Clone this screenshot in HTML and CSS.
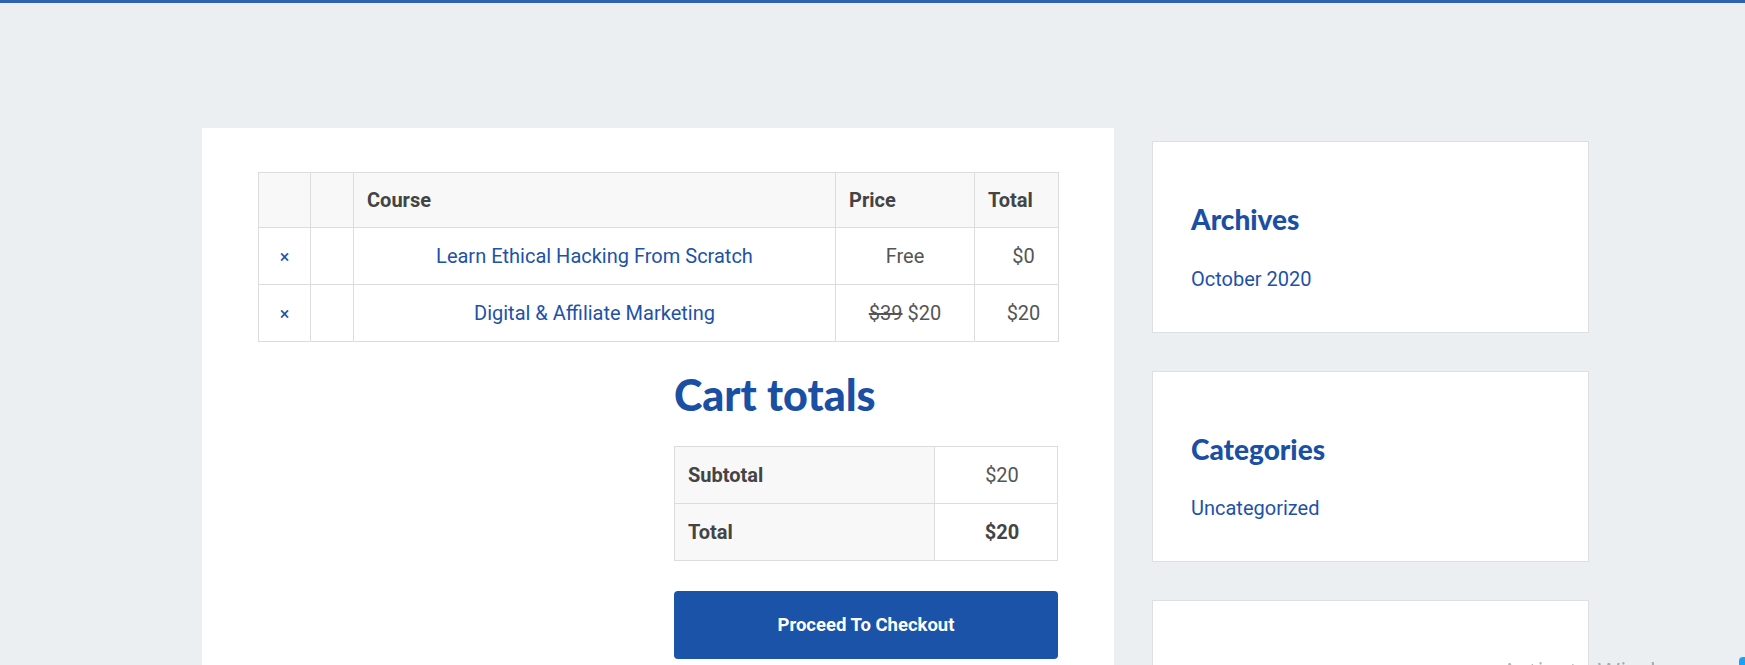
FILE: index.html
```html
<!DOCTYPE html>
<html lang="en">
<head>
<meta charset="utf-8">
<title>Cart</title>
<link rel="stylesheet" href="styles.css">
</head>
<body>
<div class="page">
  <main class="card">
    <table class="cart">
      <thead>
        <tr>
          <th class="c-remove"></th>
          <th class="c-thumb"></th>
          <th class="c-name">Course</th>
          <th class="c-price">Price</th>
          <th class="c-total">Total</th>
        </tr>
      </thead>
      <tbody>
        <tr>
          <td class="c-remove"><a href="#" class="remove">×</a></td>
          <td class="c-thumb"></td>
          <td class="c-name"><a href="#">Learn Ethical Hacking From Scratch</a></td>
          <td class="c-price">Free</td>
          <td class="c-total">$0</td>
        </tr>
        <tr>
          <td class="c-remove"><a href="#" class="remove">×</a></td>
          <td class="c-thumb"></td>
          <td class="c-name"><a href="#">Digital &amp; Affiliate Marketing</a></td>
          <td class="c-price"><del>$39</del> $20</td>
          <td class="c-total">$20</td>
        </tr>
      </tbody>
    </table>

    <section class="totals">
      <h2 class="totals-title">Cart totals</h2>
      <table class="totals-table">
        <tr>
          <th>Subtotal</th>
          <td>$20</td>
        </tr>
        <tr>
          <th>Total</th>
          <td><strong>$20</strong></td>
        </tr>
      </table>
      <a href="#" class="checkout">Proceed To Checkout</a>
    </section>
  </main>

  <aside class="sidebar">
    <div class="widget">
      <h3 class="widget-title">Archives</h3>
      <a href="#" class="widget-link">October 2020</a>
    </div>
    <div class="widget">
      <h3 class="widget-title">Categories</h3>
      <a href="#" class="widget-link">Uncategorized</a>
    </div>
    <div class="widget widget-tall"></div>
  </aside>
</div>
<div class="watermark">Activate Windows</div>
<div class="edge-dot"></div>
</body>
</html>
```

FILE: styles.css
```css
* { box-sizing: border-box; }

html, body { height: 100%; }

body {
  margin: 0;
  background: #ebeff2;
  border-top: 3px solid #2e62b0;
  font-family: Roboto, "Liberation Sans", Arial, sans-serif;
  font-size: 20px;
  color: #555;
  overflow: hidden;
}

a { text-decoration: none; color: #1d52a8; }

.page {
  display: flex;
  align-items: flex-start;
  gap: 38px;
  padding-left: 202px;
  padding-top: 125px;
}

.card {
  width: 912px;
  background: #fff;
  padding: 44px 56px 40px 56px;
  flex: none;
}

table { border-collapse: collapse; }

.cart {
  width: 800px;
  border: 1px solid #dcdcdc;
  table-layout: fixed;
}

.cart th, .cart td {
  border: 1px solid #dcdcdc;
  line-height: 24px;
  vertical-align: middle;
  padding-top: 0;
  padding-bottom: 0;
}

.cart th {
  height: 55px;
  background: #f8f8f8;
  color: #444;
  font-weight: 700;
  text-align: left;
  padding-left: 13px;
  padding-right: 13px;
}

.cart td {
  height: 57px;
  padding-left: 13px;
  padding-right: 13px;
  text-align: center;
  color: #555;
}

.cart .c-remove { width: 52px; padding-left: 0; padding-right: 0; }
.cart .c-thumb { width: 43px; }
.cart .c-name { width: 482px; }
.cart .c-price { width: 139px; }
.cart .c-total { width: 84px; }

.cart td.c-total { padding-left: 26px; padding-right: 12px; }

.remove { color: #1d52a8; font-size: 18px; line-height: 1; }

del { color: #555; }

.totals {
  width: 384px;
  margin-left: auto;
  margin-top: 27px;
}

.totals-title {
  font-family: Lato, "Open Sans", sans-serif;
  font-weight: 900;
  font-size: 43px;
  line-height: 1.2;
  color: #1b4fa3;
  margin: 0 0 25px;
}

.totals-table {
  width: 100%;
  border: 1px solid #dcdcdc;
}

.totals-table th, .totals-table td {
  border: 1px solid #dcdcdc;
  line-height: 24px;
  height: 57px;
  padding: 0 13px;
  vertical-align: middle;
}

.totals-table th {
  width: 260px;
  background: #f8f8f8;
  text-align: left;
  color: #444;
  font-weight: 700;
}

.totals-table td {
  text-align: center;
  padding-left: 25px;
  color: #555;
}

.totals-table strong { color: #444; }

.checkout {
  display: block;
  margin-top: 30px;
  height: 68px;
  line-height: 68px;
  background: #1b53a8;
  color: #fff;
  border-radius: 4px;
  text-align: center;
  font-weight: 700;
  font-size: 18.5px;
}

.sidebar {
  width: 437px;
  flex: none;
  margin-top: 13px;
  display: flex;
  flex-direction: column;
  gap: 38px;
}

.widget {
  background: #fff;
  border: 1px solid #dcdfe3;
  padding: 61px 38px 39px;
}

.widget-title {
  font-family: Lato, "Open Sans", sans-serif;
  font-weight: 900;
  font-size: 28px;
  line-height: 1.2;
  color: #1b4fa3;
  margin: 0 0 29px;
}

.widget-link {
  display: block;
  line-height: 27px;
  color: #1d52a8;
}

.widget-tall { height: 200px; }

.watermark {
  position: fixed;
  left: 1502px;
  top: 654px;
  font-family: "Noto Sans", "Open Sans", sans-serif;
  font-size: 24px;
  color: rgba(0, 0, 0, 0.28);
  white-space: nowrap;
}

.edge-dot {
  position: fixed;
  left: 1739px;
  top: 657px;
  width: 8px;
  height: 12px;
  border-radius: 4px 0 0 0;
  background: #1da1f2;
}
```
